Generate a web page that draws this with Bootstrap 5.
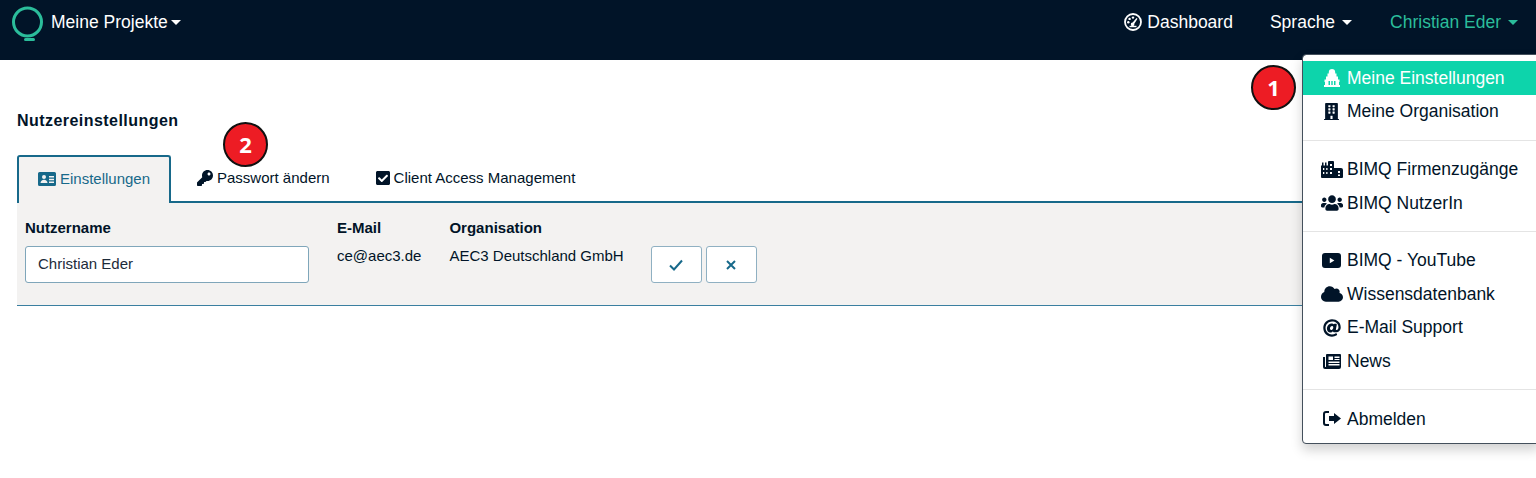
<!DOCTYPE html>
<html lang="de">
<head>
    <meta charset="UTF-8">
    <meta name="viewport" content="width=device-width, initial-scale=1.0">
    <title>Nutzereinstellungen</title>
    <link href="https://cdn.jsdelivr.net/npm/bootstrap@5.3.3/dist/css/bootstrap.min.css" rel="stylesheet">
    <script defer src="https://cdn.jsdelivr.net/npm/bootstrap@5.3.3/dist/js/bootstrap.bundle.min.js"></script>
    <style>
        html, body {
            height: 478px;
            overflow: hidden;
        }

        body {
            background-color: #fff;
            color: #011428;
            font-family: "Liberation Sans", Arial, sans-serif;
            font-size: 15px;
            position: relative;
        }

        svg {
            fill: currentColor;
            flex: none;
        }

        /* top bar */
        .topbar {
            background-color: #011428;
            height: 60px;
            padding: 0 18px 0 11px;
            align-items: flex-start;
            font-size: 17.5px;
        }

        .topbar-link {
            color: #fff;
            text-decoration: none;
            line-height: 44px;
            display: flex;
            align-items: center;
        }

        .topbar-link.dropdown-toggle::after {
            margin-left: 7px;
            vertical-align: 0;
        }

        .topbar-user {
            color: #2bbd9b;
        }

        .logo-link {
            margin-right: 7px;
        }

        .projects-link.dropdown-toggle::after {
            margin-left: 3px;
        }

        .dash-link {
            gap: 5px;
        }

        .lang-link {
            margin-left: 37px;
        }

        .topbar-user {
            margin-left: 38px;
        }

        /* user menu */
        .user-menu {
            position: absolute;
            top: 54px;
            left: 1302px;
            right: -4px;
            display: block;
            padding: 6px 0 7px;
            border: 1px solid #44505c;
            border-radius: 4px;
            box-shadow: 0 6px 12px rgba(0, 0, 0, .18);
            font-size: 17.5px;
            z-index: 10;
        }

        .user-menu .dropdown-item {
            color: #011428;
            display: flex;
            align-items: center;
            height: 33.5px;
            padding: 0 0 0 18px;
            gap: 5px;
        }

        .user-menu .dropdown-item.active {
            background-color: #0dd4ab;
            color: #fff;
        }

        .user-menu .dropdown-divider {
            margin: 11.7px 0;
            border-top: 1px solid #e4e4e4;
            opacity: 1;
        }

        .menu-icon {
            width: 21px;
            display: flex;
            justify-content: center;
        }

        /* page */
        .page-title {
            font-size: 16px;
            font-weight: 700;
            letter-spacing: .45px;
            margin: 52px 0 0 17px;
            line-height: 18px;
        }

        .settings-tabs {
            margin: 25px 0 0 17px;
            height: 48px;
            border-bottom: 2px solid #17698a;
            flex-wrap: nowrap;
        }

        .settings-tabs .nav-link {
            border: 0;
            border-radius: 0;
            height: 46px;
            padding: 0;
            color: #011428;
            display: flex;
            align-items: center;
            gap: 4px;
        }

        .settings-tabs .tab-first {
            width: 154px;
            height: 48px;
            justify-content: center;
            background-color: #f3f2f1;
            color: #17698a;
            border: 2px solid #17698a;
            border-bottom: 0;
            border-top-left-radius: 3px;
            border-top-right-radius: 3px;
            padding-bottom: 2px;
        }

        .tab-second {
            margin-left: 26px;
        }

        .tab-third {
            margin-left: 46px;
        }

        .settings-panel {
            margin-left: 17px;
            height: 103px;
            padding: 16px 8px 0;
            background-color: #f3f2f1;
            border-bottom: 1px solid #3a7fa0;
            gap: 28px;
        }

        .field-head {
            font-weight: 700;
            font-size: 15px;
            line-height: 18px;
            margin-bottom: 9px;
        }

        .field-text {
            font-size: 15px;
            line-height: 20px;
        }

        .name-input {
            width: 284px;
            height: 37px;
            font-size: 15px;
            color: #1c2b3a;
            padding: 0 12px 3px;
            border: 1px solid #7fa6ba;
            border-radius: 3px;
        }

        .action-btn {
            width: 51px;
            height: 37px;
            padding: 0;
            background-color: #fff;
            color: #17698a;
            border: 1px solid #8fb0c2;
            border-radius: 3px;
            display: flex;
            align-items: center;
            justify-content: center;
        }

        .action-row {
            margin: 27px 0 0 -1px;
            gap: 4px;
        }

        /* numbered callouts over the screenshot */
        .callout {
            position: absolute;
            width: 45px;
            height: 45px;
            border-radius: 50%;
            background-color: #ed1c24;
            border: 2px solid #111;
            color: #fff;
            font-family: "Open Sans", sans-serif;
            font-weight: 700;
            font-size: 22px;
            display: flex;
            align-items: center;
            justify-content: center;
            z-index: 5;
        }

        .callout-one {
            left: 1251px;
            top: 65px;
        }

        .callout-two {
            left: 223px;
            top: 122px;
        }
    </style>
</head>
<body>

    <nav class="topbar d-flex justify-content-between">
        <div class="d-flex">
            <a class="topbar-link logo-link" href="#">
                <svg width="33" height="42" viewBox="0 0 33 42"><circle cx="16.500" cy="21" r="14" fill="none" stroke="#2bbd9b" stroke-width="3"/><rect x="13" y="37" width="11" height="3" rx="1.500" fill="#2bbd9b"/></svg>
            </a>
            <a class="topbar-link projects-link dropdown-toggle" href="#">Meine Projekte</a>
        </div>
        <div class="d-flex">
            <a class="topbar-link dash-link" href="#">
                <svg width="18" height="18" viewBox="0 0 18 18"><circle cx="9" cy="9" r="8" fill="none" stroke="#fff" stroke-width="1.800"/><circle cx="9" cy="4.600" r="1.200"/><circle cx="5.600" cy="5.900" r="1.200"/><circle cx="4.300" cy="9.300" r="1.200"/><path d="M12.500 5l1 .8-3.200 5a1.800 1.800 0 1 1-1.600-1.200z"/><path d="M5.500 13.500h7" fill="none" stroke="#fff" stroke-width="1.400"/></svg>
                Dashboard
            </a>
            <a class="topbar-link lang-link dropdown-toggle" href="#">Sprache</a>
            <a class="topbar-link topbar-user dropdown-toggle" href="#">Christian Eder</a>
        </div>
    </nav>

    <div class="dropdown-menu user-menu">
        <a class="dropdown-item active" href="#">
            <span class="menu-icon"><svg width="16" height="18" viewBox="0 0 16 18"><path fill-rule="evenodd" d="M8 0c1.900 0 3.200 1.200 3.200 3v1.500h1.300v3H14v3h1.500V13H15v3h1v2H0v-2h1v-3H.5v-2.500H2v-3h1.500v-3h1.300V3C4.800 1.200 6.100 0 8 0zM4.500 12v4H6v-4zm2.800 0v4h1.400v-4zm2.700 0v4h1.500v-4z"/></svg></span>
            Meine Einstellungen
        </a>
        <a class="dropdown-item" href="#">
            <span class="menu-icon"><svg width="15" height="17" viewBox="0 0 448 512"><path d="M436 480h-20V24c0-13.255-10.745-24-24-24H56C42.745 0 32 10.745 32 24v456H12c-6.627 0-12 5.373-12 12v20h448v-20c0-6.627-5.373-12-12-12zM128 76c0-6.627 5.373-12 12-12h40c6.627 0 12 5.373 12 12v40c0 6.627-5.373 12-12 12h-40c-6.627 0-12-5.373-12-12V76zm0 96c0-6.627 5.373-12 12-12h40c6.627 0 12 5.373 12 12v40c0 6.627-5.373 12-12 12h-40c-6.627 0-12-5.373-12-12v-40zm52 148h-40c-6.627 0-12-5.373-12-12v-40c0-6.627 5.373-12 12-12h40c6.627 0 12 5.373 12 12v40c0 6.627-5.373 12-12 12zm76 160h-64v-84c0-6.627 5.373-12 12-12h40c6.627 0 12 5.373 12 12v84zm64-172c0 6.627-5.373 12-12 12h-40c-6.627 0-12-5.373-12-12v-40c0-6.627 5.373-12 12-12h40c6.627 0 12 5.373 12 12v40zm0-96c0 6.627-5.373 12-12 12h-40c-6.627 0-12-5.373-12-12v-40c0-6.627 5.373-12 12-12h40c6.627 0 12 5.373 12 12v40zm0-96c0 6.627-5.373 12-12 12h-40c-6.627 0-12-5.373-12-12V76c0-6.627 5.373-12 12-12h40c6.627 0 12 5.373 12 12v40z"/></svg></span>
            Meine Organisation
        </a>
        <hr class="dropdown-divider">
        <a class="dropdown-item" href="#">
            <span class="menu-icon"><svg width="22" height="17" viewBox="0 0 22 17"><path fill-rule="evenodd" d="M0 4.500h1V1.500h1.500v3H4V1.500h1.500v3H7V1a1 1 0 0 1 1-1h4a1 1 0 0 1 1 1v6h7a2 2 0 0 1 2 2v7a1 1 0 0 1-1 1H1a1 1 0 0 1-1-1zm2 2.500v2h1.300V7zm0 4v2h1.300v-2zm3.200-4v2h1.300V7zm0 4v2h1.300v-2zM9 3v2h2V3zm0 4v2h2V7zm0 4v2h2v-2zm8-1v2h2v-2zm0 3.500V15h2v-1.500z"/></svg></span>
            BIMQ Firmenzugänge
        </a>
        <a class="dropdown-item" href="#">
            <span class="menu-icon"><svg width="22" height="18" viewBox="0 0 640 512"><path d="M96 224c35.300 0 64-28.700 64-64s-28.700-64-64-64-64 28.700-64 64 28.700 64 64 64zm448 0c35.300 0 64-28.700 64-64s-28.700-64-64-64-64 28.700-64 64 28.700 64 64 64zm32 32h-64c-17.600 0-33.500 7.100-45.100 18.600 40.300 22.100 68.900 62 75.100 109.400h66c17.700 0 32-14.300 32-32v-32c0-35.300-28.700-64-64-64zm-256 0c61.900 0 112-50.100 112-112S381.900 32 320 32 208 82.100 208 144s50.100 112 112 112zm76.800 32h-8.300c-20.800 10-43.900 16-68.500 16s-47.600-6-68.500-16h-8.300C179.600 288 128 339.600 128 403.200V432c0 26.500 21.500 48 48 48h288c26.500 0 48-21.500 48-48v-28.800c0-63.600-51.600-115.200-115.200-115.200zm-223.700-13.400C161.500 263.100 145.600 256 128 256H64c-35.300 0-64 28.700-64 64v32c0 17.700 14.300 32 32 32h65.900c6.300-47.400 34.900-87.300 75.200-109.400z"/></svg></span>
            BIMQ NutzerIn
        </a>
        <hr class="dropdown-divider">
        <a class="dropdown-item" href="#">
            <span class="menu-icon"><svg width="19" height="15" viewBox="0 0 19 15"><path fill-rule="evenodd" d="M3 0h13a3 3 0 0 1 3 3v9a3 3 0 0 1-3 3H3a3 3 0 0 1-3-3V3a3 3 0 0 1 3-3zm4.800 4.800v5.400l4.600-2.700z"/></svg></span>
            BIMQ - YouTube
        </a>
        <a class="dropdown-item" href="#">
            <span class="menu-icon"><svg width="22" height="18" viewBox="0 0 640 512"><path d="M537.600 226.600c4.100-10.700 6.400-22.400 6.400-34.600 0-53-43-96-96-96-19.700 0-38.100 6-53.300 16.200C367 64.200 315.300 32 256 32c-88.400 0-160 71.600-160 160 0 2.700.1 5.400.2 8.100C40.200 219.800 0 273.200 0 336c0 79.500 64.500 144 144 144h368c70.700 0 128-57.300 128-128 0-61.900-44-113.600-102.400-125.400z"/></svg></span>
            Wissensdatenbank
        </a>
        <a class="dropdown-item" href="#">
            <span class="menu-icon"><svg width="18" height="18" viewBox="0 0 512 512"><path d="M256 8C118.941 8 8 118.919 8 256c0 137.059 110.919 248 248 248 48.154 0 95.342-14.140 135.408-40.223 12.005-7.815 14.625-24.288 5.552-35.372l-10.177-12.433c-7.671-9.371-21.179-11.667-31.373-5.129C325.920 429.757 291.314 440 256 440c-101.458 0-184-82.542-184-184S154.542 72 256 72c100.139 0 184 57.619 184 160 0 38.786-21.093 79.742-58.170 83.693-17.349-.454-16.910-12.857-13.476-30.024l23.433-121.110C394.653 149.750 383.308 136 368.225 136h-44.981a13.518 13.518 0 0 0-13.432 11.993l-.01.092c-14.697-17.901-40.448-21.775-59.971-21.775-74.580 0-137.831 62.234-137.831 151.460 0 65.303 36.785 105.870 96 105.870 26.984 0 57.369-15.637 74.991-38.333 9.522 34.104 40.613 34.103 70.710 34.103C462.609 379.410 504 307.798 504 232 504 95.653 394.023 8 256 8zm-21.680 304.430c-22.249 0-36.070-15.623-36.070-40.771 0-44.993 30.779-72.729 58.630-72.729 22.292 0 35.601 15.241 35.601 40.770 0 45.061-33.875 72.730-58.161 72.730z"/></svg></span>
            E-Mail Support
        </a>
        <a class="dropdown-item" href="#">
            <span class="menu-icon"><svg width="18" height="15" viewBox="0 0 18 15"><path fill-rule="evenodd" d="M4 0h13a1 1 0 0 1 1 1v12a2 2 0 0 1-2 2H2a2 2 0 0 1-2-2V3h2v9.500a.5.5 0 0 0 1 0V1a1 1 0 0 1 1-1zm1.500 2.500v3.500h4.500V2.500zm6 0V4h5V2.500zm0 2.500v1h5V5zM5.500 7.500V9h11V7.500zm0 2.500v1.500h11V10z"/></svg></span>
            News
        </a>
        <hr class="dropdown-divider">
        <a class="dropdown-item" href="#">
            <span class="menu-icon"><svg width="18" height="15" viewBox="0 0 18 15"><path d="M6 0v2H3a1 1 0 0 0-1 1v9a1 1 0 0 0 1 1h3v2H3a3 3 0 0 1-3-3V3a3 3 0 0 1 3-3z"/><path d="M11 2l7 5.500-7 5.500V10H6V5h5z"/></svg></span>
            Abmelden
        </a>
    </div>

    <span class="callout callout-one">1</span>
    <span class="callout callout-two">2</span>

    <h1 class="page-title">Nutzereinstellungen</h1>

    <ul class="nav settings-tabs">
        <li class="nav-item">
            <a class="nav-link tab-first" href="#">
                <svg width="18" height="14" viewBox="0 0 18 14"><path fill-rule="evenodd" d="M1.500 0h15A1.500 1.500 0 0 1 18 1.500v11a1.500 1.500 0 0 1-1.500 1.500h-15A1.500 1.500 0 0 1 0 12.500v-11A1.500 1.500 0 0 1 1.500 0zM6 3a2 2 0 1 0 0 4 2 2 0 0 0 0-4zM2.500 11h7c0-2-1.500-3.300-3.500-3.300S2.500 9 2.500 11zM11 4v1.500h5V4zm0 2.700v1.500h5V6.700zM11 9.400v1.500h5V9.400z"/></svg>
                Einstellungen
            </a>
        </li>
        <li class="nav-item">
            <a class="nav-link tab-second" href="#">
                <svg width="16" height="16" viewBox="0 0 512 512"><path d="M512 176.001C512 273.203 433.202 352 336 352c-11.220 0-22.190-1.062-32.827-3.069l-24.012 27.014A23.999 23.999 0 0 1 261.223 384H224v40c0 13.255-10.745 24-24 24h-40v40c0 13.255-10.745 24-24 24H24c-13.255 0-24-10.745-24-24v-78.059c0-6.365 2.529-12.470 7.029-16.971l161.802-161.802C163.108 213.814 160 195.271 160 176 160 78.798 238.797.001 335.999 0 433.488-.001 512 78.511 512 176.001zM336 128c0 26.510 21.490 48 48 48s48-21.490 48-48-21.490-48-48-48-48 21.490-48 48z"/></svg>
                Passwort ändern
            </a>
        </li>
        <li class="nav-item">
            <a class="nav-link tab-third" href="#">
                <svg width="14" height="16" viewBox="0 0 448 512"><path d="M400 480H48c-26.510 0-48-21.490-48-48V80c0-26.510 21.490-48 48-48h352c26.510 0 48 21.490 48 48v352c0 26.510-21.490 48-48 48zm-204.686-98.059l184-184c6.248-6.248 6.248-16.379 0-22.627l-22.627-22.627c-6.248-6.248-16.379-6.249-22.628 0L184 302.745l-70.059-70.059c-6.248-6.248-16.379-6.248-22.628 0l-22.627 22.627c-6.248 6.248-6.248 16.379 0 22.627l104 104c6.249 6.250 16.379 6.250 22.628.001z"/></svg>
                Client Access Management
            </a>
        </li>
    </ul>

    <div class="settings-panel d-flex">
        <div>
            <div class="field-head">Nutzername</div>
            <input type="text" class="form-control name-input" value="Christian Eder">
        </div>
        <div>
            <div class="field-head">E-Mail</div>
            <div class="field-text">ce@aec3.de</div>
        </div>
        <div>
            <div class="field-head">Organisation</div>
            <div class="field-text">AEC3 Deutschland GmbH</div>
        </div>
        <div class="action-row d-flex">
            <button class="btn action-btn" type="button" aria-label="Speichern">
                <svg width="14" height="12" viewBox="0 0 14 12"><path d="M1 6.500l4 4 8-9" fill="none" stroke="currentColor" stroke-width="2"/></svg>
            </button>
            <button class="btn action-btn" type="button" aria-label="Abbrechen">
                <svg width="12" height="12" viewBox="0 0 12 12"><path d="M2 2l8 8M10 2l-8 8" fill="none" stroke="currentColor" stroke-width="2"/></svg>
            </button>
        </div>
    </div>

</body>
</html>
